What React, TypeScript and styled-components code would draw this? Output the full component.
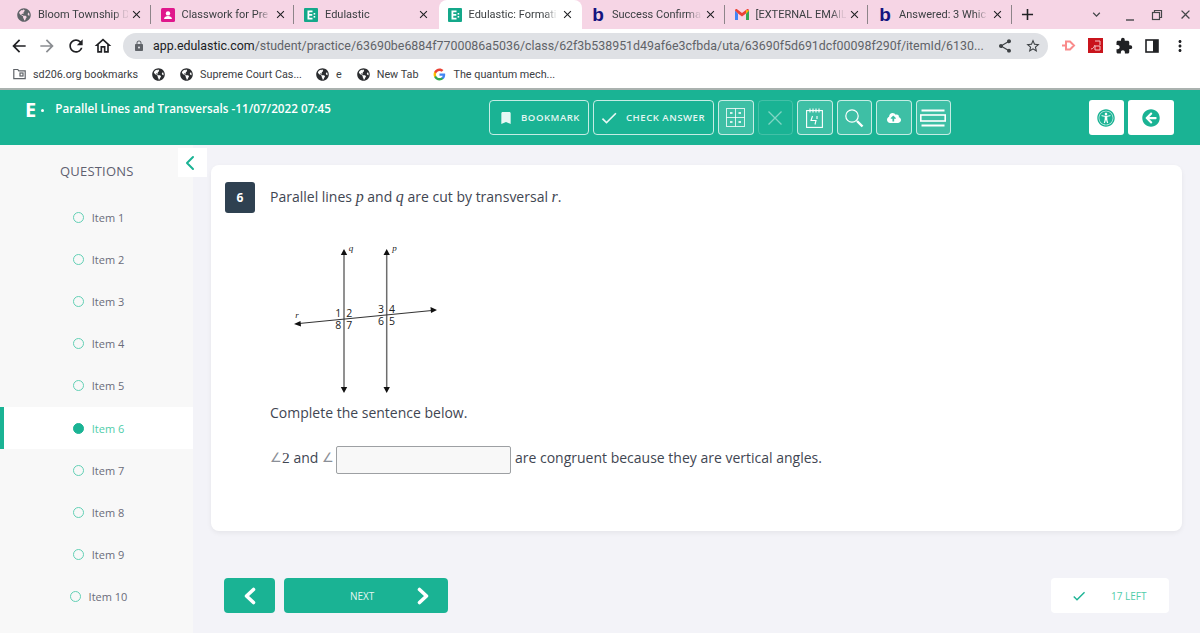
import styled, { createGlobalStyle } from 'styled-components';
import {
  MdAdd, MdArrowBack, MdArrowForward, MdBookmark, MdCheck, MdClose, MdExpandMore, MdExtension,
  MdLock, MdMoreVert, MdOutlineHome, MdRefresh, MdShare, MdStarBorder,
} from 'react-icons/md';
import { FaArrowCircleLeft, FaCloudUploadAlt, FaGlobeAmericas, FaUniversalAccess } from 'react-icons/fa';
import { ChevronLeft } from 'lucide-react';

const GlobalStyle = createGlobalStyle`
  html, body { margin: 0; padding: 0; background: #fff; }
  * { box-sizing: border-box; }
`;

const Page = styled.div`
  width: 1200px;
  height: 633px;
  overflow: hidden;
  display: flex;
  flex-direction: column;
  font-family: "Open Sans", sans-serif;
`;

/* browser chrome */
const TabStrip = styled.div`
  height: 29px;
  flex: none;
  background: #f6d5e5;
  display: flex;
  align-items: stretch;
  padding-left: 8px;
  font-family: Roboto, sans-serif;
`;

const Tab = styled.div<{ $active?: boolean }>`
  width: 143.5px;
  flex: none;
  position: relative;
  display: flex;
  align-items: center;
  padding-left: 8px;
  background: ${p => (p.$active ? '#fff' : 'transparent')};
  border-radius: ${p => (p.$active ? '8px 8px 0 0' : '0')};
`;

const Separator = styled.span`
  position: absolute;
  right: 1px;
  top: 5px;
  height: 19px;
  width: 1px;
  background: #8d8489;
`;

const FaviconSlot = styled.span`
  width: 16px;
  height: 16px;
  flex: none;
  display: flex;
  align-items: center;
  justify-content: center;
  color: #5f6368;
`;

const TabTitle = styled.span`
  margin-left: 6px;
  width: 90px;
  font-size: 11px;
  color: #3c4043;
  white-space: nowrap;
  -webkit-mask-image: linear-gradient(90deg, #000 84%, rgba(0, 0, 0, 0.15) 96%);
  mask-image: linear-gradient(90deg, #000 84%, rgba(0, 0, 0, 0.15) 96%);
`;

const TabClose = styled(MdClose)`
  margin-left: 2px;
  font-size: 13px;
  color: #202124;
  flex: none;
`;

const BingMark = styled.span`
  font-family: "Liberation Sans", sans-serif;
  font-weight: 700;
  font-size: 19px;
  line-height: 16px;
  color: #14147f;
`;

const WindowControls = styled.div`
  flex: 1;
  display: flex;
  align-items: center;
  color: #3c4043;
`;

const NewTab = styled(MdAdd)`
  margin-left: 5px;
  font-size: 19px;
  color: #202124;
`;

const WindowIcon = styled.span<{ $left: number }>`
  margin-left: ${p => p.$left}px;
  display: flex;
  font-size: 15px;
  color: #45474a;
`;

const Toolbar = styled.div`
  height: 33px;
  flex: none;
  display: flex;
  align-items: center;
  padding-left: 9px;
  background: #fff;
  font-family: Roboto, sans-serif;
`;

const NavIcon = styled.span<{ $dim?: boolean; $width: number }>`
  width: ${p => p.$width}px;
  flex: none;
  display: flex;
  font-size: 20px;
  color: ${p => (p.$dim ? '#8a8d91' : '#202124')};
`;

const UrlBar = styled.div`
  margin-left: 5px;
  width: 925px;
  height: 26px;
  flex: none;
  border-radius: 13px;
  background: #dfe1e5;
  display: flex;
  align-items: center;
  padding-left: 10px;
  font-size: 12.4px;
`;

const UrlText = styled.span`
  margin-left: 8px;
  width: 844px;
  flex: none;
  color: #5f6368;
  white-space: nowrap;
  b { font-weight: 400; color: #202124; }
`;

const UrlAction = styled.span<{ $left: number }>`
  margin-left: ${p => p.$left}px;
  display: flex;
  color: #3c4043;
  font-size: 16px;
`;

const ExtensionRow = styled.div`
  margin-left: 13px;
  flex: 1;
  display: flex;
  align-items: center;
  gap: 12px;
  font-size: 18px;
  color: #202124;
`;

const Bookmarks = styled.div`
  height: 28px;
  flex: none;
  display: flex;
  align-items: center;
  padding: 0 0 2px 13px;
  background: #fff;
  border-bottom: 2px solid #aab2af;
  font-family: Roboto, sans-serif;
  font-size: 10.8px;
  color: #3c4043;
`;

const BookmarkItem = styled.span<{ $left: number }>`
  margin-left: ${p => p.$left}px;
  display: flex;
  align-items: center;
  gap: 7px;
  white-space: nowrap;
`;

const GlobeBlack = styled(FaGlobeAmericas)`
  font-size: 13px;
  color: #2b2d30;
`;

/* app header */
const Header = styled.header`
  height: 55px;
  flex: none;
  background: #1ab394;
  display: flex;
  align-items: center;
  padding-right: 26px;
`;

const Brand = styled.div`
  width: 489px;
  height: 100%;
  flex: none;
  display: flex;
  align-items: flex-start;
  padding: 8px 0 0 25px;
  color: #fff;
`;

const BrandLetter = styled.span`
  font-size: 20px;
  line-height: 24px;
  font-weight: 700;
`;

const BrandDot = styled.span`
  width: 3px;
  height: 3px;
  border-radius: 50%;
  background: #fff;
  margin: 11px 0 0 5px;
`;

const ReportTitle = styled.h1`
  margin: 2px 0 0 11px;
  font-size: 11.7px;
  line-height: 17px;
  font-weight: 600;
  white-space: nowrap;
`;

const Tools = styled.div`
  display: flex;
  gap: 4px;
`;

const TextTool = styled.button<{ $width: number; $pad: number; $gap: number }>`
  width: ${p => p.$width}px;
  height: 35px;
  padding: 0 0 0 ${p => p.$pad}px;
  display: flex;
  align-items: center;
  background: transparent;
  border: 1px solid rgba(255, 255, 255, 0.75);
  border-radius: 4px;
  color: rgba(255, 255, 255, 0.9);
  font-family: inherit;
  font-size: 9.6px;
  font-weight: 600;
  letter-spacing: 0.5px;
  white-space: nowrap;
  span { margin-left: ${p => p.$gap}px; }
  svg { flex: none; }
`;

const IconTool = styled.button<{ $off?: boolean }>`
  width: 35.5px;
  height: 35px;
  padding: 0;
  display: flex;
  align-items: center;
  justify-content: center;
  background: ${p => (p.$off ? 'transparent' : 'rgba(255, 255, 255, 0.16)')};
  border: 1px solid ${p => (p.$off ? 'rgba(255, 255, 255, 0.18)' : 'rgba(255, 255, 255, 0.7)')};
  border-radius: 4px;
  color: ${p => (p.$off ? 'rgba(255, 255, 255, 0.45)' : '#fff')};
`;

const RightTools = styled.div`
  margin-left: auto;
  display: flex;
  gap: 4px;
`;

const WhiteTool = styled.button<{ $width: number }>`
  width: ${p => p.$width}px;
  height: 35px;
  padding: 0;
  border: 0;
  border-radius: 3px;
  background: #fff;
  color: #1ab394;
  display: flex;
  align-items: center;
  justify-content: center;
`;

/* body */
const Body = styled.div`
  flex: 1;
  display: flex;
  min-height: 0;
  background: #f3f3f8;
`;

const Sidebar = styled.aside`
  width: 193px;
  flex: none;
  position: relative;
  background: #f8f8f8;
  display: flex;
  flex-direction: column;
`;

const Collapse = styled.button`
  position: absolute;
  left: 178px;
  top: 3px;
  width: 29px;
  height: 29px;
  padding: 0 5px 0 0;
  border: 0;
  background: #fff;
  color: #1ab394;
  display: flex;
  align-items: center;
  justify-content: center;
`;

const SideTitle = styled.div`
  margin: 16px 0 15px;
  height: 20px;
  padding-left: 60px;
  font-size: 13px;
  line-height: 20px;
  letter-spacing: 0.2px;
  color: #5f6070;
`;

const ItemRow = styled.div<{ $active?: boolean }>`
  height: 42.2px;
  flex: none;
  display: flex;
  align-items: center;
  justify-content: center;
  gap: 8px;
  padding-left: ${p => (p.$active ? '0' : '4px')};
  font-size: 11px;
  background: ${p => (p.$active ? '#fff' : 'transparent')};
  color: ${p => (p.$active ? '#4fcdaa' : '#6a6c7a')};
  border-left: ${p => (p.$active ? '4px solid #1ab394' : '0')};
`;

const Dot = styled.span<{ $active?: boolean }>`
  width: 11px;
  height: 11px;
  border-radius: 50%;
  flex: none;
  border: 1.5px solid ${p => (p.$active ? '#1ab394' : '#62d0b5')};
  background: ${p => (p.$active ? '#1ab394' : 'transparent')};
`;

const Main = styled.main`
  flex: 1;
  display: flex;
  flex-direction: column;
  padding: 20px 18px 0 18px;
`;

const Card = styled.section`
  height: 366px;
  flex: none;
  background: #fff;
  border-radius: 8px;
  box-shadow: 0 2px 5px rgba(0, 0, 0, 0.06);
  display: flex;
  padding: 17px 14px;
  gap: 15px;
`;

const Badge = styled.div`
  width: 30px;
  height: 31px;
  flex: none;
  border-radius: 3px;
  background: #2f4151;
  color: #fff;
  font-size: 12px;
  font-weight: 700;
  display: flex;
  align-items: center;
  justify-content: center;
`;

const Question = styled.div`
  flex: 1;
  color: #3f4652;
  font-size: 14px;
  line-height: 20px;
`;

const Prompt = styled.p`
  margin: 5px 0 0;
`;

const MathVar = styled.i`
  font-family: "Liberation Serif", serif;
  font-size: 16px;
`;

const MathNum = styled.span`
  font-family: "Liberation Serif", serif;
  font-size: 15.5px;
`;

const Figure = styled.svg`
  display: block;
  margin: 28px 0 0;
`;

const SubPrompt = styled.p`
  margin: 3px 0 0;
`;

const Sentence = styled.div`
  margin-top: 19px;
  display: flex;
  align-items: center;
  white-space: pre;
`;

const Angle = styled.span`
  font-size: 12.5px;
  color: #8b8f97;
`;

const AnswerBox = styled.input`
  width: 175px;
  height: 28px;
  margin: 4px 4px 0 2px;
  padding: 0;
  background: #f8f8f8;
  border: 1px solid #9da0a3;
  border-radius: 2px;
`;

const Footer = styled.div`
  display: flex;
  align-items: center;
  margin-top: 47px;
  padding: 0 13px;
`;

const PrevButton = styled.button`
  width: 51px;
  height: 35px;
  padding: 0;
  border: 0;
  border-radius: 4px;
  background: #1ab394;
  display: flex;
  align-items: center;
  justify-content: center;
`;

const NextButton = styled.button`
  margin-left: 9px;
  width: 164px;
  height: 35px;
  padding: 0 18px 0 66px;
  border: 0;
  border-radius: 4px;
  background: #1ab394;
  color: rgba(255, 255, 255, 0.9);
  font-family: inherit;
  font-size: 10px;
  display: flex;
  align-items: center;
  justify-content: space-between;
`;

const LeftCount = styled.div`
  margin-left: auto;
  width: 118px;
  height: 35px;
  border-radius: 4px;
  background: #fff;
  display: flex;
  align-items: center;
  padding-left: 20px;
  color: #1ab394;
  font-size: 16px;
  span {
    margin-left: 24px;
    font-size: 10px;
    color: #4fcdaa;
  }
`;

const Favicon = ({ kind }: { kind: string }) => {
  if (kind === 'globe') return <FaGlobeAmericas size={14} />;
  if (kind === 'bing') return <BingMark>b</BingMark>;
  if (kind === 'classroom')
    return (
      <svg width="14" height="14" viewBox="0 0 14 14">
        <rect width="14" height="14" rx="1.5" fill="#e0178c" />
        <circle cx="7" cy="5.4" r="2.2" fill="#fff" />
        <path d="M3 11c.4-2.2 2-3 4-3s3.6.8 4 3z" fill="#fff" />
      </svg>
    );
  if (kind === 'gmail')
    return (
      <svg width="14" height="11" viewBox="0 0 14 11">
        <path d="M0 1.5V11h3V4.5z" fill="#4285f4" />
        <path d="M14 1.5V11h-3V4.5z" fill="#34a853" />
        <path d="M0 1.5C0 .2 1.4-.4 2.4.4L7 4l4.6-3.6c1-.8 2.4-.2 2.4 1.1L11 4.5 7 7.6 3 4.5z" fill="#ea4335" />
        <path d="M11 .9 14 1.5 11 4.5z" fill="#fbbc04" />
      </svg>
    );
  return (
    <svg width="14" height="14" viewBox="0 0 14 14">
      <rect width="14" height="14" rx="1" fill="#14a88a" />
      <path d="M3.5 2.5h5v1.8H5.3v1.6h3v1.8h-3v2h3.2v1.8h-5z" fill="#fff" />
      <rect x="9.6" y="5" width="1.6" height="1.6" fill="#fff" />
      <rect x="9.6" y="8" width="1.6" height="1.6" fill="#fff" />
    </svg>
  );
};

const Chevron = ({ dir }: { dir: 'left' | 'right' }) => (
  <svg width="14" height="18" viewBox="0 0 14 18" fill="none" stroke="#fff" strokeWidth="3.6" strokeLinecap="round" strokeLinejoin="round">
    <path d={dir === 'left' ? 'M10.5 2.5 3.5 9l7 6.5' : 'M3.5 2.5 10.5 9l-7 6.5'} />
  </svg>
);

const tabs = [
  { title: 'Bloom Township D', icon: 'globe', sep: true },
  { title: 'Classwork for Pre', icon: 'classroom', sep: true },
  { title: 'Edulastic', icon: 'edulastic' },
  { title: 'Edulastic: Formati', icon: 'edulastic', active: true },
  { title: 'Success Confirma', icon: 'bing', sep: true },
  { title: '[EXTERNAL EMAIL', icon: 'gmail', sep: true },
  { title: 'Answered: 3 Whic', icon: 'bing', sep: true },
];

const items = Array.from({ length: 10 }, (_, i) => i + 1);

const angleLabels = [
  ['1', 68.3, 82], ['2', 79.3, 82], ['8', 68.3, 94], ['7', 79.3, 94],
  ['3', 111, 78], ['4', 122, 78], ['6', 111, 90], ['5', 122, 90],
] as const;

const Transversal = () => (
  <Figure width="190" height="165" viewBox="0 0 190 165">
    <g stroke="#6d6d6d" strokeWidth="1.5">
      <line x1="74" y1="18" x2="74" y2="154" />
      <line x1="116.7" y1="18" x2="116.7" y2="154" />
    </g>
    <line x1="29" y1="88.5" x2="162" y2="75.5" stroke="#333" strokeWidth="1.1" />
    <g fill="#111">
      <path d="M74 14l3.2 6h-6.4zM74 158l-3.2-6h6.4zM116.7 14l3.2 6h-6.4zM116.7 158l-3.2-6h6.4z" />
      <path d="M24 89l6.5-3 .5 5.5zM167 75l-6.5-3 .5 6z" />
    </g>
    <g fontFamily='"Open Sans", sans-serif' fontSize="10.5" fill="#222" textAnchor="middle">
      {angleLabels.map(([t, x, y]) => (
        <text key={t} x={x} y={y}>{t}</text>
      ))}
    </g>
    <g fontFamily='"Liberation Serif", serif' fontStyle="italic" fontSize="9" fill="#222" textAnchor="middle">
      <text x="81" y="16">q</text>
      <text x="124.5" y="16">p</text>
      <text x="27" y="83">r</text>
    </g>
  </Figure>
);

export default function App() {
  return (
    <Page>
      <GlobalStyle />
      <TabStrip>
        {tabs.map(t => (
          <Tab key={t.title} $active={t.active}>
            <FaviconSlot><Favicon kind={t.icon} /></FaviconSlot>
            <TabTitle>{t.title}</TabTitle>
            <TabClose />
            {t.sep ? <Separator /> : null}
          </Tab>
        ))}
        <WindowControls>
          <NewTab />
          <WindowIcon $left={52}><MdExpandMore /></WindowIcon>
          <WindowIcon $left={20}>
            <svg width="12" height="12" viewBox="0 0 12 12"><path d="M2 11h8" stroke="#45474a" strokeWidth="1.4" /></svg>
          </WindowIcon>
          <WindowIcon $left={15}>
            <svg width="12" height="12" viewBox="0 0 12 12" fill="none" stroke="#45474a" strokeWidth="1.2">
              <rect x="1.5" y="3.5" width="7" height="7" />
              <path d="M3.5 3V1.5h7v7H9" />
            </svg>
          </WindowIcon>
          <WindowIcon $left={15}><MdClose /></WindowIcon>
        </WindowControls>
      </TabStrip>

      <Toolbar>
        <NavIcon $width={28}><MdArrowBack /></NavIcon>
        <NavIcon $width={29} $dim><MdArrowForward /></NavIcon>
        <NavIcon $width={27}><MdRefresh /></NavIcon>
        <NavIcon $width={25}><MdOutlineHome /></NavIcon>
        <UrlBar>
          <MdLock size={12} color="#5f6368" />
          <UrlText>
            <b>app.edulastic.com</b>/student/practice/63690be6884f7700086a5036/class/62f3b538951d49af6e3cfbda/uta/63690f5d691dcf00098f290f/itemId/6130...
          </UrlText>
          <UrlAction $left={0}><MdShare /></UrlAction>
          <UrlAction $left={12}><MdStarBorder /></UrlAction>
        </UrlBar>
        <ExtensionRow>
          <svg width="15" height="15" viewBox="0 0 15 15" fill="none" stroke="#f98b8b" strokeWidth="2">
            <path d="M1 7.5h3M5 3.5h4l4 4-4 4H5z" />
          </svg>
          <svg width="15" height="15" viewBox="0 0 15 15">
            <rect width="15" height="15" fill="#c9141c" />
            <path d="M7 3h5v4M3 11c2 0 3-2 4-4M7 8h5v4H7z" fill="none" stroke="#f5c6c8" strokeWidth="1" />
          </svg>
          <MdExtension />
          <svg width="14" height="14" viewBox="0 0 14 14" fill="none">
            <rect x="1" y="1" width="12" height="12" stroke="#202124" strokeWidth="1.6" />
            <rect x="8" y="1" width="5" height="12" fill="#202124" />
          </svg>
          <MdMoreVert />
        </ExtensionRow>
      </Toolbar>

      <Bookmarks>
        <BookmarkItem $left={0}>
          <svg width="13" height="12" viewBox="0 0 13 12" fill="none" stroke="#5f6368" strokeWidth="1.2">
            <path d="M.8 1.5h4l1 1.4h6.4v7.8H.8z" />
            <rect x="7" y="5" width="3" height="3" />
          </svg>
          sd206.org bookmarks
        </BookmarkItem>
        <BookmarkItem $left={14}><GlobeBlack /></BookmarkItem>
        <BookmarkItem $left={15}><GlobeBlack />Supreme Court Cas...</BookmarkItem>
        <BookmarkItem $left={14}><GlobeBlack />e</BookmarkItem>
        <BookmarkItem $left={15}><GlobeBlack />New Tab</BookmarkItem>
        <BookmarkItem $left={15}>
          <svg width="13" height="13" viewBox="0 0 48 48">
            <path fill="#4285f4" d="M45 24.5c0-1.6-.1-3.1-.4-4.5H24v8.5h11.8c-.5 2.7-2 5-4.4 6.6v5.5h7.1C42.7 36.7 45 31.1 45 24.5z" />
            <path fill="#34a853" d="M24 46c5.9 0 10.9-2 14.5-5.3l-7.1-5.5c-2 1.3-4.500 2.100-7.400 2.100-5.700 0-10.500-3.800-12.300-9H4.400v5.700C8 41.100 15.400 46 24 46z" />
            <path fill="#fbbc04" d="M11.700 28.300c-.9-2.700-.9-5.800 0-8.500v-5.700H4.400c-3 6-3 13.900 0 19.900z" />
            <path fill="#ea4335" d="M24 10.700c3.200 0 6.100 1.100 8.400 3.300l6.300-6.300C34.900 4.200 29.900 2 24 2 15.400 2 8 6.900 4.400 14.100l7.300 5.700c1.800-5.200 6.600-9.100 12.300-9.100z" />
          </svg>
          The quantum mech...
        </BookmarkItem>
      </Bookmarks>

      <Header>
        <Brand>
          <BrandLetter>E</BrandLetter>
          <BrandDot />
          <ReportTitle>Parallel Lines and Transversals -11/07/2022 07:45</ReportTitle>
        </Brand>
        <Tools>
          <TextTool $width={100} $pad={8} $gap={7}><MdBookmark size={16} /><span>BOOKMARK</span></TextTool>
          <TextTool $width={121} $pad={5} $gap={7}><MdCheck size={20} /><span>CHECK ANSWER</span></TextTool>
          <IconTool>
            <svg width="19" height="19" viewBox="0 0 19 19" fill="none" stroke="#fff" strokeOpacity=".8">
              <rect x=".5" y=".5" width="18" height="18" />
              <path d="M.5 9.5h18M9.500 .5v18" />
              <path d="M4 5h2.500M12.500 5H15M4 14h2.500M12.500 14H15" strokeWidth="2" />
            </svg>
          </IconTool>
          <IconTool $off>
            <svg width="16" height="16" viewBox="0 0 16 16" stroke="currentColor" strokeWidth="1.3"><path d="M1.500 1.500l13 13M14.500 1.500l-13 13" /></svg>
          </IconTool>
          <IconTool>
            <svg width="17" height="20" viewBox="0 0 17 20" fill="none" stroke="#fff" strokeWidth="1.1">
              <rect x=".6" y="2.600" width="15.800" height="16.800" />
              <path d="M4 .5v4M7 .5v4M10 .5v4M13 .5v4M6.500 8l-1.500 4.500h5L9 16.500M11 8v3" />
            </svg>
          </IconTool>
          <IconTool>
            <svg width="20" height="20" viewBox="0 0 20 20" fill="none" stroke="#fff">
              <circle cx="8" cy="8" r="6.2" strokeWidth="1.2" />
              <path d="M13 13l5.500 5.500" strokeWidth="2.4" />
            </svg>
          </IconTool>
          <IconTool><FaCloudUploadAlt size={14} /></IconTool>
          <IconTool>
            <svg width="26" height="18" viewBox="0 0 26 18" fill="none" stroke="#fff" strokeWidth="2.2">
              <path d="M1.500 1.500h23M1.500 16.500h23" />
              <rect x=".8" y="6" width="24.400" height="6" strokeWidth="1.6" />
            </svg>
          </IconTool>
        </Tools>
        <RightTools>
          <WhiteTool $width={35.5}><FaUniversalAccess size={18} /></WhiteTool>
          <WhiteTool $width={46}><FaArrowCircleLeft size={18} /></WhiteTool>
        </RightTools>
      </Header>

      <Body>
        <Sidebar>
          <Collapse><ChevronLeft size={26} strokeWidth={2} /></Collapse>
          <SideTitle>QUESTIONS</SideTitle>
          {items.map(n => (
            <ItemRow key={n} $active={n === 6}>
              <Dot $active={n === 6} />
              Item {n}
            </ItemRow>
          ))}
        </Sidebar>
        <Main>
          <Card>
            <Badge>6</Badge>
            <Question>
              <Prompt>
                Parallel lines <MathVar>p</MathVar> and <MathVar>q</MathVar> are cut by transversal <MathVar>r</MathVar>.
              </Prompt>
              <Transversal />
              <SubPrompt>Complete the sentence below.</SubPrompt>
              <Sentence>
                <Angle>∠</Angle><MathNum>2</MathNum> and <Angle>∠</Angle>
                <AnswerBox aria-label="answer" />
                are congruent because they are vertical angles.
              </Sentence>
            </Question>
          </Card>
          <Footer>
            <PrevButton><Chevron dir="left" /></PrevButton>
            <NextButton>NEXT<Chevron dir="right" /></NextButton>
            <LeftCount><MdCheck /><span>17 LEFT</span></LeftCount>
          </Footer>
        </Main>
      </Body>
    </Page>
  );
}
